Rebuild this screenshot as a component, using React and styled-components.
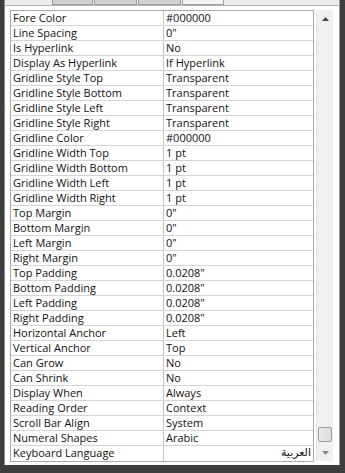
import React from 'react';
import styled, { createGlobalStyle } from 'styled-components';

const GlobalStyle = createGlobalStyle`
  html, body {
    margin: 0;
    padding: 0;
    background: #3d3d3d;
  }
  body {
    font-family: "Open Sans", "Liberation Sans", sans-serif;
  }
`;

const rows = [
  ['Fore Color', '#000000'],
  ['Line Spacing', '0"'],
  ['Is Hyperlink', 'No'],
  ['Display As Hyperlink', 'If Hyperlink'],
  ['Gridline Style Top', 'Transparent'],
  ['Gridline Style Bottom', 'Transparent'],
  ['Gridline Style Left', 'Transparent'],
  ['Gridline Style Right', 'Transparent'],
  ['Gridline Color', '#000000'],
  ['Gridline Width Top', '1 pt'],
  ['Gridline Width Bottom', '1 pt'],
  ['Gridline Width Left', '1 pt'],
  ['Gridline Width Right', '1 pt'],
  ['Top Margin', '0"'],
  ['Bottom Margin', '0"'],
  ['Left Margin', '0"'],
  ['Right Margin', '0"'],
  ['Top Padding', '0.0208"'],
  ['Bottom Padding', '0.0208"'],
  ['Left Padding', '0.0208"'],
  ['Right Padding', '0.0208"'],
  ['Horizontal Anchor', 'Left'],
  ['Vertical Anchor', 'Top'],
  ['Can Grow', 'No'],
  ['Can Shrink', 'No'],
  ['Display When', 'Always'],
  ['Reading Order', 'Context'],
  ['Scroll Bar Align', 'System'],
  ['Numeral Shapes', 'Arabic'],
  ['Keyboard Language', 'العربية', true],
];

const Frame = styled.div`
  width: 345px;
  height: 473px;
  display: flex;
  flex-direction: column;
  overflow: hidden;
  background: #3d3d3d;
`;

const Window = styled.div`
  height: 465px;
  flex: none;
  margin: 0 5px 0 4px;
  background: #ececec;
  border-left: 1px solid #8a8a8a;
  border-right: 1px solid #9a9a9a;
  display: flex;
  flex-direction: column;
  overflow: hidden;
`;

const TabStrip = styled.div`
  height: 5px;
  flex: none;
  display: flex;
  align-items: flex-end;
  padding-left: 47px;
  overflow: hidden;
  background: #ececec;
`;

const Tab = styled.div`
  width: ${p => p.w}px;
  height: 18px;
  flex: none;
  box-sizing: border-box;
  margin-right: 1px;
  background: ${p => (p.active ? '#f4f4f4' : '#d2d2d2')};
  border: 1px solid #9c9c9c;
  border-top: none;
  font-size: 11px;
  line-height: 14px;
  color: #333;
  text-align: center;
`;

const Panel = styled.div`
  flex: 1;
  min-height: 0;
  background: #ffffff;
  border-top: 1px solid #b5b5b5;
  padding: 4px 5px 2px 5px;
  display: flex;
  align-items: flex-start;
  gap: 2px;
`;

const Grid = styled.div`
  width: 304px;
  flex: none;
  box-sizing: border-box;
  border: 1px solid #a9a9a9;
  display: flex;
  flex-direction: column;
`;

const Row = styled.div`
  height: 15px;
  flex: none;
  display: grid;
  grid-template-columns: 152px 1fr;
  border-bottom: 1px solid #d4d4d4;
  box-sizing: border-box;
  &:last-child {
    border-bottom: none;
  }
`;

const Cell = styled.div`
  font-size: 11px;
  line-height: 14px;
  color: #111;
  padding: 0 2px;
  white-space: nowrap;
  overflow: hidden;
  text-align: ${p => (p.rtl ? 'right' : 'left')};
  font-family: ${p => (p.rtl ? '"DejaVu Sans", sans-serif' : 'inherit')};
  & + & {
    border-left: 1px solid #c4c4c4;
  }
`;

const ScrollBar = styled.div`
  width: 17px;
  height: 451px;
  flex: none;
  background: #f0f0f0;
  border-left: 1px solid #e4e4e4;
  box-sizing: border-box;
  display: flex;
  flex-direction: column;
  align-items: center;
`;

const Arrow = styled.div`
  height: 17px;
  width: 16px;
  display: flex;
  align-items: center;
  justify-content: center;
`;

const Track = styled.div`
  flex: 1;
  width: 100%;
  display: flex;
  flex-direction: column;
  justify-content: flex-end;
  align-items: center;
  padding-bottom: 2px;
  box-sizing: border-box;
`;

const Thumb = styled.div`
  width: 14px;
  height: 15px;
  box-sizing: border-box;
  border: 1px solid #9e9e9e;
  border-radius: 2px;
  background: linear-gradient(90deg, #eaeaea, #dcdcdc);
`;

const Tri = ({ up }) => (
  <svg width="7" height="4" viewBox="0 0 7 4">
    <path d={up ? 'M0 4 L3.5 0 L7 4 Z' : 'M0 0 L3.5 4 L7 0 Z'} fill={up ? '#444' : '#888'} />
  </svg>
);

export default function App() {
  return (
    <Frame>
      <GlobalStyle />
      <Window>
        <TabStrip>
          <Tab w={41}>Data</Tab>
          <Tab w={43}>Event</Tab>
          <Tab w={43}>Other</Tab>
          <Tab w={42} active>All</Tab>
        </TabStrip>
        <Panel>
          <Grid>
            {rows.map(([k, v, rtl]) => (
              <Row key={k}>
                <Cell>{k}</Cell>
                <Cell rtl={rtl} dir={rtl ? 'rtl' : undefined}>{v}</Cell>
              </Row>
            ))}
          </Grid>
          <ScrollBar>
            <Arrow><Tri up /></Arrow>
            <Track><Thumb /></Track>
            <Arrow><Tri /></Arrow>
          </ScrollBar>
        </Panel>
      </Window>
    </Frame>
  );
}
